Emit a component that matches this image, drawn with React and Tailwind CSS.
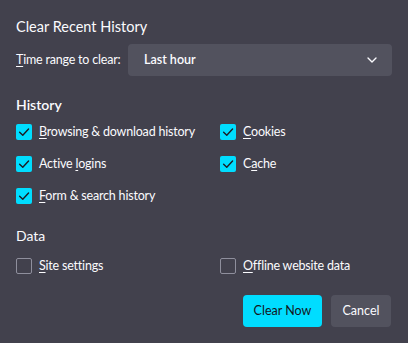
import { ChevronDown } from 'lucide-react'

function Check({ checked, label, u }) {
  // u = index of underlined access-key letter
  return (
    <label className="flex items-center gap-[7px] h-[32px] text-[12.5px] tracking-[-0.2px] text-[#fbfbfe] whitespace-nowrap">
      {checked ? (
        <span className="flex items-center justify-center w-[16px] h-[16px] rounded-[2px] bg-[#00ddff]">
          <svg className="w-[14px] h-[14px]" viewBox="0 0 16 16" fill="none" stroke="#1c1b22" strokeWidth="1.6" strokeLinecap="round" strokeLinejoin="round">
            <path d="M3 8.2 L6.6 11.6 L13.2 4.6" />
          </svg>
        </span>
      ) : (
        <span className="w-[16px] h-[16px] rounded-[2px] border border-[#8f8f9d] bg-[#42414d]" />
      )}
      <span>
        {label.slice(0, u)}
        <span className="underline underline-offset-2">{label[u]}</span>
        {label.slice(u + 1)}
      </span>
    </label>
  )
}

export default function App() {
  return (
    <div
      className="w-[408px] h-[343px] bg-[#42414d] text-[#fbfbfe] px-[16px] pt-[15px] flex flex-col"
      style={{ fontFamily: 'Lato, "Open Sans", sans-serif' }}
    >
      <h1 className="text-[14.5px] leading-[24px]">Clear Recent History</h1>

      {/* Time range */}
      <div className="flex items-center mt-[5px] h-[32px]">
        <span className="text-[12.5px] tracking-[-0.2px] w-[112px] whitespace-nowrap">
          <span className="underline underline-offset-2">T</span>ime range to clear:
        </span>
        <div className="flex-1 h-[32px] rounded-[4px] bg-[#52525e] flex items-center justify-between pl-[16px] pr-[12px] text-[12.5px] font-semibold">
          <span>Last hour</span>
          <ChevronDown className="w-[16px] h-[16px]" strokeWidth={2} />
        </div>
      </div>

      {/* History */}
      <h2 className="text-[14px] font-semibold mt-[18px] leading-[22px]">History</h2>
      <div className="grid grid-cols-[204px_1fr]">
        <Check checked label="Browsing & download history" u={0} />
        <Check checked label="Cookies" u={0} />
        <Check checked label="Active logins" u={7} />
        <Check checked label="Cache" u={1} />
        <Check checked label="Form & search history" u={0} />
      </div>

      {/* Data */}
      <h2 className="text-[14px] mt-[13px] leading-[22px]">Data</h2>
      <div className="grid grid-cols-[204px_1fr] mt-[3px]">
        <Check label="Site settings" u={0} />
        <Check label="Offline website data" u={0} />
      </div>

      <div className="flex justify-end gap-[9px] mt-[13px] pr-[1px]">
        <button className="h-[32px] w-[79px] rounded-[4px] bg-[#00ddff] text-[#15141a] text-[12.5px]">
          Clear Now
        </button>
        <button className="h-[32px] w-[60px] rounded-[4px] bg-[#52525e] text-[#fbfbfe] text-[12.5px]">
          Cancel
        </button>
      </div>
    </div>
  )
}
